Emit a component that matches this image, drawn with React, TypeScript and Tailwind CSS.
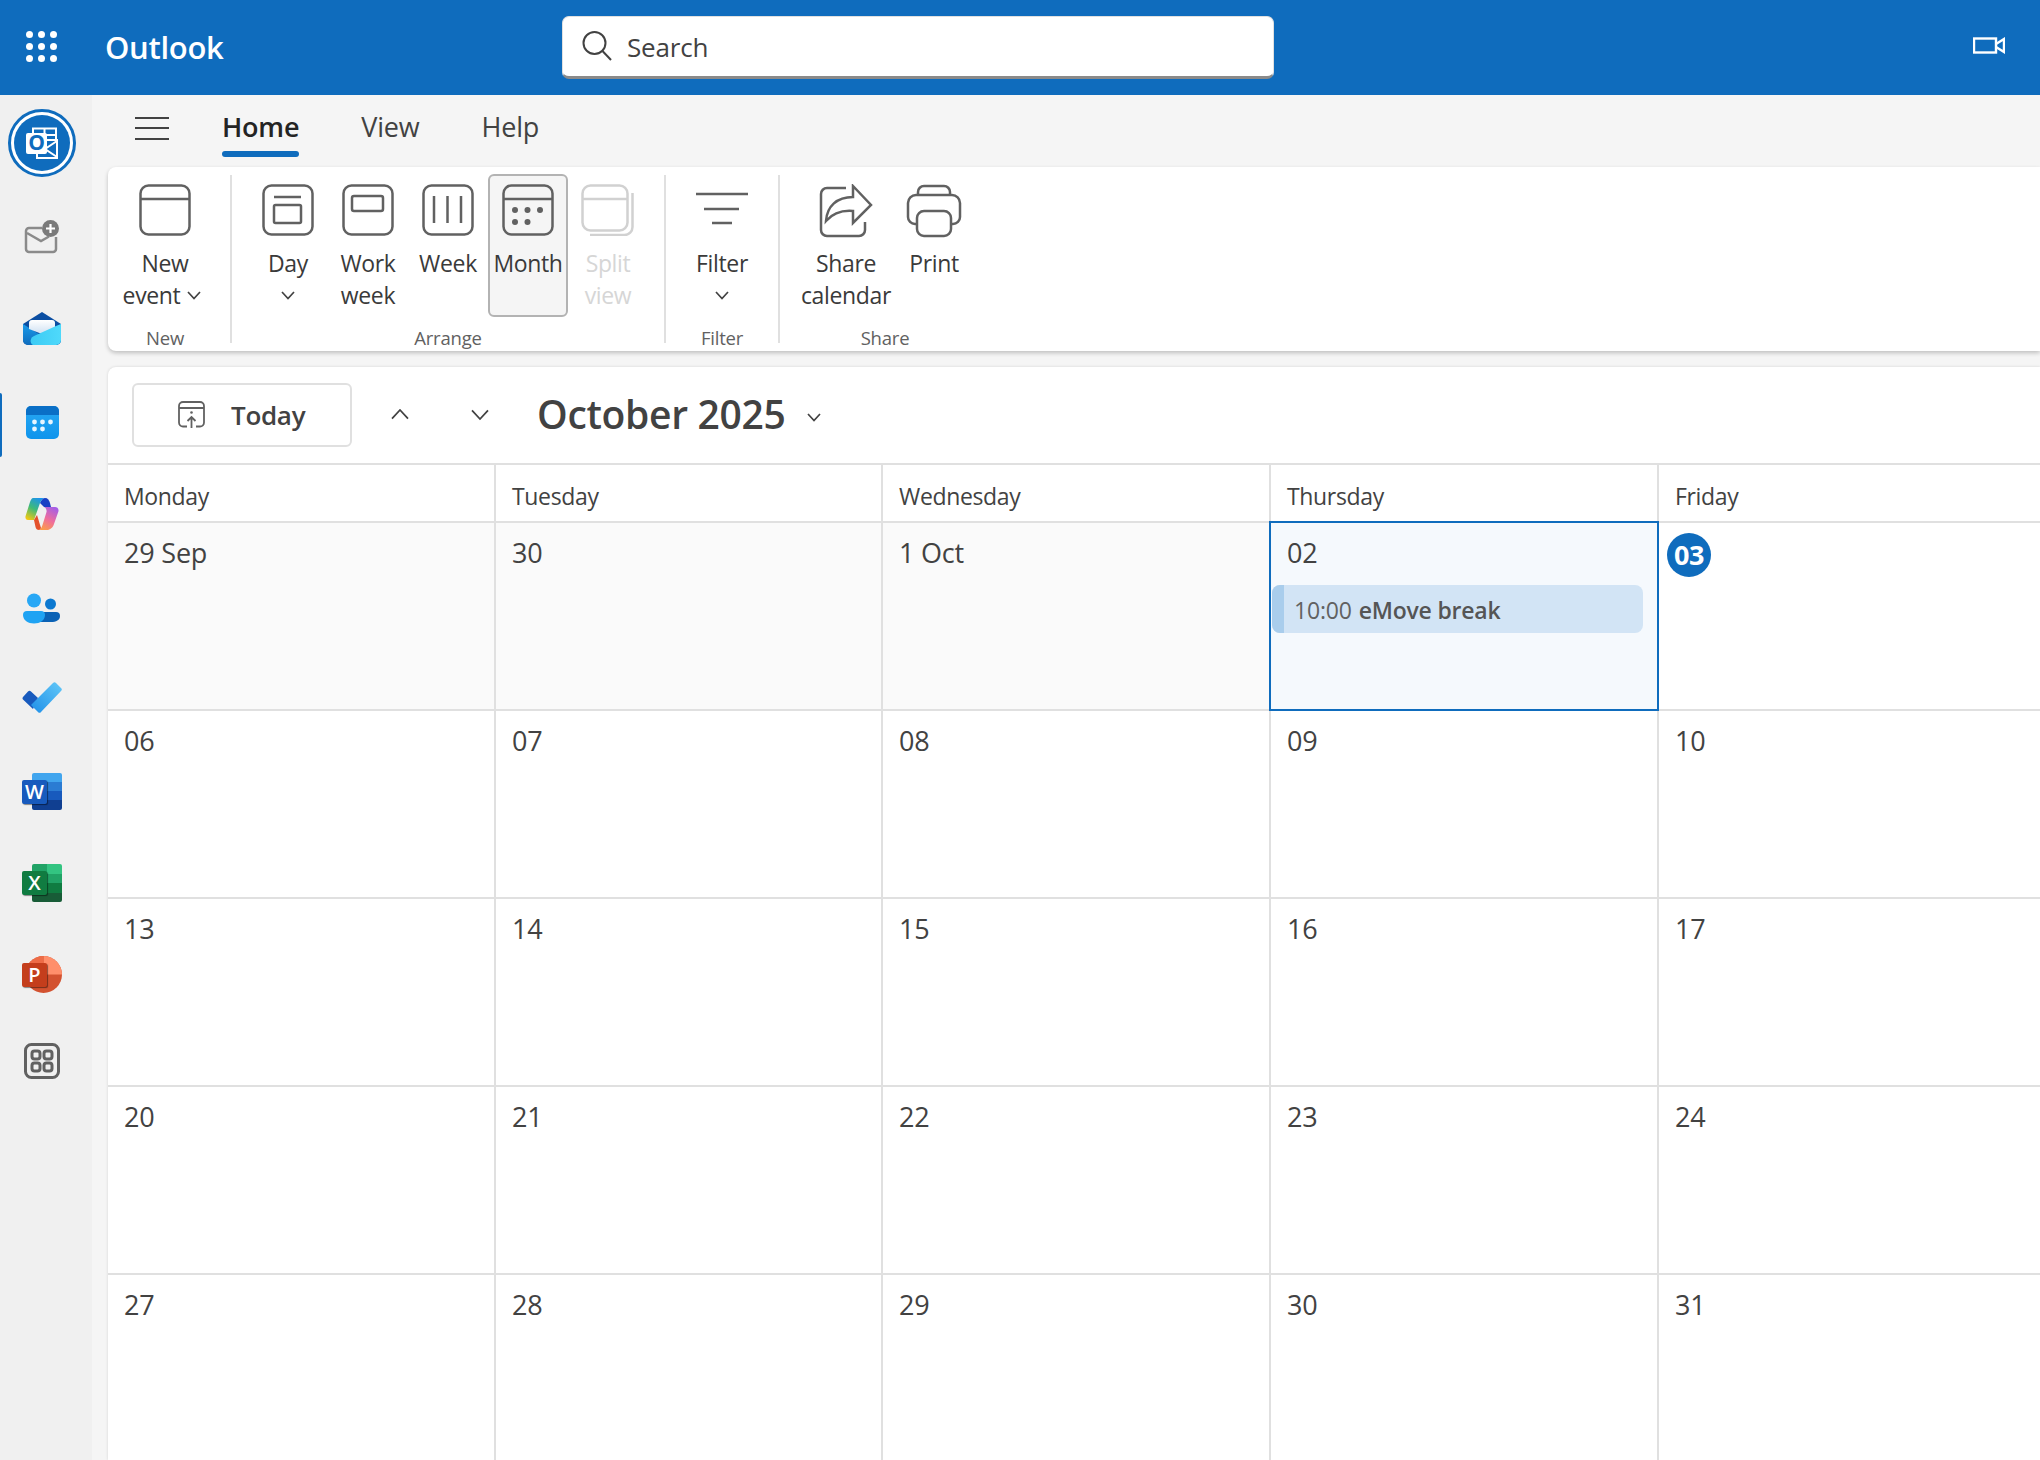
import React from "react";

const weeks = [
  ["29 Sep", "30", "1 Oct", "02", "03"],
  ["06", "07", "08", "09", "10"],
  ["13", "14", "15", "16", "17"],
  ["20", "21", "22", "23", "24"],
  ["27", "28", "29", "30", "31"],
];
const dayNames = ["Monday", "Tuesday", "Wednesday", "Thursday", "Friday"];

const Chevron = ({ up = false, w = 14, color = "#424242" }: { up?: boolean; w?: number; color?: string }) => (
  <svg width={w} height={w / 2 + 2} viewBox="0 0 14 9" fill="none" className="shrink-0">
    <path d={up ? "M1 8L7 1.5L13 8" : "M1 1L7 7.5L13 1"} stroke={color} strokeWidth={w > 16 ? 1.3 : 1.7} />
  </svg>
);

const CalBox = ({ children, line = false }: { children?: React.ReactNode; line?: boolean }) => (
  <svg width="52" height="52" viewBox="0 0 52 52" fill="none" stroke="#616161" strokeWidth="2.5">
    <rect x="1.5" y="1.5" width="49" height="49" rx="8" />
    {line && <path d="M1.5 15H50.5" />}
    {children}
  </svg>
);

const RibbonItem = ({
  icon,
  label,
  label2,
  chevron,
  active,
  disabled,
  w = "w-[80px]",
}: {
  icon: React.ReactNode;
  label: string;
  label2?: string;
  chevron?: boolean;
  active?: boolean;
  disabled?: boolean;
  w?: string;
}) => (
  <div
    className={`${w} h-[143px] flex flex-col items-center pt-[8px] rounded-md border-2 text-[23px] leading-[32px] tracking-[-0.35px] ${
      active ? "bg-[#f5f5f5] border-[#b3b3b3]" : "border-transparent"
    } ${disabled ? "text-[#d6d6d6]" : "text-[#3a3a3a]"}`}
  >
    <div className="h-[54px] flex items-start justify-center">{icon}</div>
    <div className="mt-[9px] whitespace-nowrap">{label}</div>
    {label2 && (
      <div className={`flex items-center gap-[7px] whitespace-nowrap ${chevron ? "pr-[6px]" : ""}`}>
        {label2}
        {chevron && <Chevron />}
      </div>
    )}
    {!label2 && chevron && (
      <div className="h-[32px] flex items-center">
        <Chevron />
      </div>
    )}
  </div>
);

const Divider = () => <div className="w-[2px] my-[8px] bg-[#e0e0e0] shrink-0" />;

const GroupLabel = ({ children }: { children: string }) => (
  <div className="text-center text-[18.5px] leading-[24px] mt-[9px] text-[#616161] tracking-[-0.2px]">{children}</div>
);

const RailSlot = ({ children, active, className = "h-[92px]" }: { children: React.ReactNode; active?: boolean; className?: string }) => (
  <div className={`${className} relative flex items-center justify-center pr-[8px]`}>
    {active && <div className="absolute left-0 top-[18px] w-[2px] h-[64px] bg-[#0f6cbd] rounded-r" />}
    {children}
  </div>
);

const OutlookLogo = () => (
  <div className="w-[68px] h-[68px] rounded-full border-[3px] border-[#0f6cbd] bg-white p-[3px]">
    <div className="w-full h-full rounded-full bg-[#0f6cbd] flex items-center justify-center">
      <svg width="32" height="32" viewBox="0 0 32 32" fill="none">
        <path d="M7 6V1.5H30V13M18.5 1.5V8M7 8H30" stroke="white" strokeWidth="2" />
        <rect x="11" y="13" width="20" height="18" fill="#0f6cbd" stroke="white" strokeWidth="2" />
        <path d="M31 14L19 22L31 30" stroke="white" strokeWidth="2" />
        <rect x="0" y="6" width="21" height="21" rx="2" fill="white" />
        <text x="10.5" y="23" textAnchor="middle" fontSize="21" fontWeight="700" fill="#0f6cbd" fontFamily="Open Sans, sans-serif">O</text>
      </svg>
    </div>
  </div>
);

const NewMail = () => (
  <svg width="36" height="36" viewBox="0 0 36 36" fill="none">
    <path d="M18 9H5A3 3 0 0 0 2 12V30A3 3 0 0 0 5 33H29A3 3 0 0 0 32 30V18" stroke="#8a8a8a" strokeWidth="2.5" />
    <path d="M3 14L17 22L25 17.5" stroke="#8a8a8a" strokeWidth="2.5" />
    <circle cx="26.5" cy="9.5" r="8.5" fill="#7a7a7a" />
    <path d="M26.5 5V14M22 9.5H31" stroke="white" strokeWidth="2.2" />
  </svg>
);

const MailIcon = () => (
  <svg width="38" height="34" viewBox="0 0 38 34">
    <defs>
      <linearGradient id="mb" x1="0" y1="0" x2="0" y2="1">
        <stop offset="0" stopColor="#1a9bea" />
        <stop offset="1" stopColor="#0f6cbd" />
      </linearGradient>
      <linearGradient id="mf" x1="0" y1="0" x2="1" y2="0">
        <stop offset="0" stopColor="#3ccbf4" />
        <stop offset="1" stopColor="#4fd9fb" />
      </linearGradient>
      <linearGradient id="ml" x1="0" y1="0" x2="0" y2="1">
        <stop offset="0" stopColor="#ffffff" />
        <stop offset="1" stopColor="#cfe0f2" />
      </linearGradient>
    </defs>
    <path d="M0 12L19 0L38 12V28A5 5 0 0 1 33 33H5A5 5 0 0 1 0 28Z" fill="#0b4ea2" />
    <path d="M0 12L19 24L38 12V28A5 5 0 0 1 33 33H5A5 5 0 0 1 0 28Z" fill="url(#mb)" />
    <path d="M6 11A3 3 0 0 1 9 8H29A3 3 0 0 1 32 11V17L19 22L6 17Z" fill="url(#ml)" />
    <path d="M10 33A5 5 0 0 1 11 24L33 14L38 12V28A5 5 0 0 1 33 33Z" fill="url(#mf)" />
  </svg>
);

const CalIcon = () => (
  <svg width="33" height="33" viewBox="0 0 33 33">
    <defs>
      <linearGradient id="cb" x1="0" y1="0" x2="0" y2="1">
        <stop offset="0" stopColor="#28a8f3" />
        <stop offset="1" stopColor="#0f94ec" />
      </linearGradient>
    </defs>
    <rect width="33" height="33" rx="5" fill="url(#cb)" />
    <path d="M0 9V5A5 5 0 0 1 5 0H28A5 5 0 0 1 33 5V9Z" fill="#0a6fc6" />
    {[[8.5, 16], [16.5, 16], [24.5, 16], [8.5, 23], [16.5, 23]].map(([x, y]) => (
      <circle key={`${x}-${y}`} cx={x} cy={y} r="2.4" fill="#e8f5ff" />
    ))}
  </svg>
);

const Copilot = () => (
  <svg width="34" height="32" viewBox="0 0 34 32">
    <defs>
      <linearGradient id="c1" x1="0.7" y1="0" x2="0.2" y2="1">
        <stop offset="0" stopColor="#1d93ee" />
        <stop offset="0.5" stopColor="#3fbb78" />
        <stop offset="1" stopColor="#f2c811" />
      </linearGradient>
      <linearGradient id="c2" x1="0.8" y1="0" x2="0.3" y2="1">
        <stop offset="0" stopColor="#a35de8" />
        <stop offset="0.55" stopColor="#ef6d9c" />
        <stop offset="1" stopColor="#fb9c4a" />
      </linearGradient>
    </defs>
    <path d="M15 5C16 2 18 0 20 0C23 0 24 2 25 5L26 9H19Z" fill="#1a3fc4" />
    <path d="M8 0H20C18 0 16 2 15 5L9 22H3C1 22 0 20 0.6 18L5 4C6 1.5 7 0 8 0Z" fill="url(#c1)" />
    <path d="M9 22L12 17L16 30C15.5 31 15 32 14 32C12 32 11 31 10.5 29Z" fill="#e4512b" />
    <path d="M19 9H30C32.5 9 34 11 33.4 13.5L29 26C28 29.5 25 32 22 32H13C15.5 32 16.5 30 17.5 27L21.5 14C22 12 21 10 19 9Z" fill="url(#c2)" />
  </svg>
);

const People = () => (
  <svg width="38" height="32" viewBox="0 0 38 32">
    <circle cx="27.5" cy="11" r="5.5" fill="#0b78d0" />
    <path d="M16 19H33A4 4 0 0 1 37 23C37 27 33 29 28 29H16Z" fill="#0b62b5" />
    <circle cx="11" cy="7.5" r="7" fill="#27a7f5" />
    <path d="M4 18H18A4 4 0 0 1 22 22C22 27 17 30.5 11 30.5S0 27 0 22A4 4 0 0 1 4 18Z" fill="#1fa3f3" />
  </svg>
);

const TodoIcon = () => (
  <svg width="40" height="32" viewBox="0 0 40 32">
    <defs>
      <linearGradient id="t1" x1="0" y1="1" x2="1" y2="0">
        <stop offset="0" stopColor="#1f8fe8" />
        <stop offset="1" stopColor="#62c8f8" />
      </linearGradient>
    </defs>
    <path d="M1 15L6 9.5A2 2 0 0 1 9 9.5L16 16L11 27L1 17.5A2 2 0 0 1 1 15Z" fill="#185abd" />
    <path d="M31 1A2 2 0 0 1 34 1L39 6A2 2 0 0 1 39 9L19 30A2 2 0 0 1 16 30L9 23Z" fill="url(#t1)" />
  </svg>
);

const OfficeLetter = ({ letter, bg }: { letter: string; bg: string }) => (
  <div className={`absolute left-0 top-[7px] w-[25px] h-[24px] rounded-[2px] ${bg} flex items-center justify-center text-white text-[20px] font-semibold font-['Open_Sans',sans-serif] leading-none shadow-[1px_1px_1px_rgba(0,0,0,0.45)]`}>
    {letter}
  </div>
);

const WordIcon = () => (
  <div className="relative w-[40px] h-[37px]">
    <div className="absolute left-[10px] top-0 w-[30px] h-[37px] rounded-[2px] overflow-hidden flex flex-col">
      <div className="flex-1 bg-[#41a5ee]" />
      <div className="flex-1 bg-[#2b7cd3]" />
      <div className="flex-1 bg-[#185abd]" />
      <div className="flex-1 bg-[#103f91]" />
    </div>
    <OfficeLetter letter="W" bg="bg-[#185abd]" />
  </div>
);

const ExcelIcon = () => (
  <div className="relative w-[40px] h-[38px]">
    <div className="absolute left-[10px] top-0 w-[30px] h-[38px] rounded-[2px] overflow-hidden grid grid-cols-2 grid-rows-4">
      <div className="bg-[#21a366]" />
      <div className="bg-[#33c481]" />
      <div className="bg-[#21a366]" />
      <div className="bg-[#21a366]" />
      <div className="bg-[#107c41]" />
      <div className="bg-[#107c41]" />
      <div className="bg-[#185c37]" />
      <div className="bg-[#185c37]" />
    </div>
    <OfficeLetter letter="X" bg="bg-[#107c41]" />
  </div>
);

const PptIcon = () => (
  <div className="relative w-[40px] h-[37px]">
    <svg width="37" height="37" viewBox="0 0 37 37" className="absolute left-[3px] top-0">
      <circle cx="18.5" cy="18.5" r="18.5" fill="#d35230" />
      <path d="M18.5 0A18.5 18.5 0 0 1 37 18.5H18.5Z" fill="#ff8f6b" />
      <path d="M18.5 0A18.5 18.5 0 0 0 0 18.5H18.5Z" fill="#ed6c47" />
    </svg>
    <OfficeLetter letter="P" bg="bg-[#c43e1c]" />
  </div>
);

const AppsIcon = () => (
  <svg width="36" height="36" viewBox="0 0 36 36" fill="none" stroke="#616161" strokeWidth="3">
    <rect x="1.5" y="1.5" width="33" height="33" rx="6" />
    <rect x="8" y="8" width="8" height="8" rx="2.5" />
    <rect x="20" y="8" width="8" height="8" rx="2.5" />
    <rect x="8" y="20" width="8" height="8" rx="2.5" />
    <rect x="20" y="20" width="8" height="8" rx="2.5" />
  </svg>
);

export default function App() {
  return (
    <div className="w-full h-screen overflow-hidden flex flex-col font-['Open_Sans','Noto_Sans',sans-serif] text-[#424242]">
      {/* top bar */}
      <div className="h-[95px] bg-[#0f6cbd] flex items-center shrink-0 relative">
        <div className="w-[83px] shrink-0 flex justify-center -mt-[2px]">
          <div className="grid grid-cols-3 gap-x-[5.5px] gap-y-[5.5px]">
            {Array.from({ length: 9 }).map((_, i) => (
              <div key={i} className="w-[6.5px] h-[6.5px] rounded-full bg-white" />
            ))}
          </div>
        </div>
        <div className="ml-[22px] w-[457px] text-white text-[31px] font-semibold tracking-[-0.3px]">Outlook</div>
        <div className="w-[712px] h-[63px] -mt-[1px] rounded-[7px] bg-white border border-[#e0e0e0] border-b-[3px] border-b-[#8a8a8a] flex items-center pl-[19px] gap-[15px]">
          <svg width="30" height="30" viewBox="0 0 30 30" fill="none" stroke="#424242" strokeWidth="2">
            <circle cx="12.5" cy="12" r="11" />
            <path d="M20.5 20L29 29" />
          </svg>
          <span className="text-[26px] tracking-[-0.2px] text-[#424242] mt-[2px]">Search</span>
        </div>
        <svg className="ml-auto mr-[35px] -mt-[4px]" width="32" height="17" viewBox="0 0 32 17" fill="none" stroke="white" strokeWidth="2.4">
          <rect x="1" y="1.5" width="22" height="14" />
          <path d="M23 7L31 2V15L23 10" />
        </svg>
      </div>

      <div className="flex-1 flex min-h-0">
        {/* left rail */}
        <div className="w-[92px] shrink-0 bg-[#f0f0f0] flex flex-col">
          <div className="h-[96px] flex items-start justify-center pt-[14px] pr-[8px]">
            <OutlookLogo />
          </div>
          <RailSlot><NewMail /></RailSlot>
          <RailSlot><MailIcon /></RailSlot>
          <RailSlot active className="h-[92px] pt-[2px]"><CalIcon /></RailSlot>
          <RailSlot className="h-[92px] pt-[2px]"><Copilot /></RailSlot>
          <RailSlot className="h-[92px] pt-[8px]"><People /></RailSlot>
          <RailSlot className="h-[92px] pt-[2px]"><TodoIcon /></RailSlot>
          <RailSlot className="h-[92px] pt-[4px]"><WordIcon /></RailSlot>
          <RailSlot className="h-[92px] pt-[4px]"><ExcelIcon /></RailSlot>
          <RailSlot className="h-[92px] pt-[2px]"><PptIcon /></RailSlot>
          <RailSlot className="h-[84px]"><AppsIcon /></RailSlot>
        </div>

        {/* main */}
        <div className="flex-1 min-w-0 bg-[#f5f5f5] pl-[16px] flex flex-col">
          <div className="h-[72px] shrink-0 flex items-center pb-[8px] text-[27px] tracking-[-0.2px] text-[#424242]">
            <div className="ml-[27px] w-[34px] flex flex-col gap-[8.5px] mt-[2px]">
              <div className="h-[2px] bg-[#424242]" />
              <div className="h-[2px] bg-[#424242]" />
              <div className="h-[2px] bg-[#424242]" />
            </div>
            <div className="ml-[53px] relative font-semibold text-[#242424]">
              Home
              <div className="absolute left-0 right-0 top-[44px] h-[6px] rounded-full bg-[#0f6cbd]" />
            </div>
            <div className="ml-[62px]">View</div>
            <div className="ml-[62px]">Help</div>
          </div>

          {/* ribbon */}
          <div className="h-[184px] shrink-0 bg-white rounded-l-lg shadow-[0_2px_4px_rgba(0,0,0,0.22)] flex">
            <div className="w-[122px] shrink-0 pt-[7px] pr-[8px]">
              <div className="flex justify-center">
                <RibbonItem
                  label="New"
                  label2="event"
                  chevron
                  w="w-[100px]"
                  icon={<CalBox line />}
                />
              </div>
              <GroupLabel>New</GroupLabel>
            </div>
            <Divider />
            <div className="w-[432px] shrink-0 pt-[7px]">
              <div className="flex justify-center">
                <RibbonItem
                  label="Day"
                  chevron
                  icon={
                    <CalBox>
                      <path d="M12 13H39" />
                      <rect x="12" y="21" width="27" height="18" rx="1.5" />
                    </CalBox>
                  }
                />
                <RibbonItem
                  label="Work"
                  label2="week"
                  icon={
                    <CalBox>
                      <rect x="10" y="12" width="31" height="15" rx="2" />
                    </CalBox>
                  }
                />
                <RibbonItem
                  label="Week"
                  icon={
                    <CalBox>
                      <path d="M12 12V39M25.5 12V39M39 12V39" />
                    </CalBox>
                  }
                />
                <RibbonItem
                  label="Month"
                  active
                  icon={
                    <CalBox line>
                      <g fill="#616161" stroke="none">
                        <circle cx="13" cy="26" r="3" />
                        <circle cx="25.5" cy="26" r="3" />
                        <circle cx="38" cy="26" r="3" />
                        <circle cx="13" cy="38" r="3" />
                        <circle cx="25.5" cy="38" r="3" />
                      </g>
                    </CalBox>
                  }
                />
                <RibbonItem
                  label="Split"
                  label2="view"
                  disabled
                  icon={
                    <svg width="54" height="52" viewBox="0 0 54 52" fill="none" stroke="#d1d1d1" strokeWidth="2.5">
                      <rect x="1.5" y="1.5" width="45" height="45" rx="8" />
                      <path d="M1.5 15H46.5" />
                      <path d="M51.5 9V43A8 8 0 0 1 43.5 51H9" />
                    </svg>
                  }
                />
              </div>
              <GroupLabel>Arrange</GroupLabel>
            </div>
            <Divider />
            <div className="w-[112px] shrink-0 pt-[7px]">
              <div className="flex justify-center">
                <RibbonItem
                  label="Filter"
                  chevron
                  icon={
                    <svg width="52" height="52" viewBox="0 0 52 52" fill="none" stroke="#616161" strokeWidth="2.5">
                      <path d="M0 10H52M8 25H43M16 39H36" />
                    </svg>
                  }
                />
              </div>
              <GroupLabel>Filter</GroupLabel>
            </div>
            <Divider />
            <div className="w-[210px] shrink-0 pt-[7px]">
              <div className="flex pl-[11px]">
                <RibbonItem
                  label="Share"
                  label2="calendar"
                  w="w-[110px]"
                  icon={
                    <svg width="54" height="54" viewBox="0 0 54 54" fill="none" stroke="#616161" strokeWidth="2.5">
                      <path d="M27 4H8A6 6 0 0 0 2 10V46A6 6 0 0 0 8 52H40A6 6 0 0 0 46 46V38" />
                      <path d="M34 2L52 21L34 39V27C22 26 14 29 7 37C8 22 18 13 34 13Z" />
                    </svg>
                  }
                />
                <RibbonItem
                  label="Print"
                  w="w-[66px]"
                  icon={
                    <svg width="56" height="54" viewBox="0 0 56 54" fill="none" stroke="#616161" strokeWidth="2.5">
                      <path d="M12 11V8A6 6 0 0 1 18 2H38A6 6 0 0 1 44 8V11" />
                      <path d="M11 40H9A7 7 0 0 1 2 33V19A8 8 0 0 1 10 11H46A8 8 0 0 1 54 19V33A7 7 0 0 1 47 40H45" />
                      <rect x="11" y="27" width="34" height="25" rx="7" />
                    </svg>
                  }
                />
              </div>
              <GroupLabel>Share</GroupLabel>
            </div>
          </div>

          {/* calendar */}
          <div className="mt-[16px] flex-1 min-h-0 bg-white rounded-tl-lg shadow-[0_0_3px_rgba(0,0,0,0.14)] overflow-hidden">
            <div className="h-[98px] border-b-2 border-[#e0e0e0] flex items-center">
              <div className="ml-[24px] w-[220px] h-[64px] rounded-[6px] border-2 border-[#e0e0e0] flex items-center pl-[44px] gap-[26px] -mt-[1px]">
                <svg width="27" height="27" viewBox="0 0 27 27" fill="none" stroke="#616161" strokeWidth="1.8">
                  <path d="M9 25.5H5A4 4 0 0 1 1 21.5V5A4 4 0 0 1 5 1H22A4 4 0 0 1 26 5V21.5A4 4 0 0 1 22 25.5H18" />
                  <path d="M1 7H26" />
                  <path d="M13.5 27V16M9.5 20L13.5 16L17.5 20" />
                  <circle cx="13.5" cy="11.5" r="1.3" fill="#616161" stroke="none" />
                </svg>
                <span className="text-[26px] font-semibold text-[#424242] tracking-[-0.3px] mt-[1px]">Today</span>
              </div>
              <div className="ml-[38px] -mt-[2px]"><Chevron up w={20} /></div>
              <div className="ml-[60px]"><Chevron w={20} /></div>
              <div className="ml-[47px] text-[39px] font-semibold text-[#424242] tracking-[-0.3px] -mt-[1px]">October 2025</div>
              <div className="ml-[21px] mt-[4px]"><Chevron /></div>
            </div>

            <div className="grid grid-cols-[388px_387px_388px_388px_388px] w-[1939px]">
              {dayNames.map((d) => (
                <div key={d} className="h-[58px] border-r-2 border-b-2 border-[#e0e0e0] pl-[16px] pt-[15px] text-[23px] leading-[32px] tracking-[-0.35px] text-[#424242]">
                  {d}
                </div>
              ))}
              {weeks.map((week, r) =>
                week.map((day, c) => {
                  const selected = r === 0 && c === 3;
                  const today = r === 0 && c === 4;
                  return (
                    <div
                      key={`${r}-${c}`}
                      className={`h-[188px] relative border-r-2 border-b-2 border-[#e0e0e0] ${
                        selected ? "bg-[#f5f9fd]" : r === 0 && c < 3 ? "bg-[#fafafa]" : "bg-white"
                      }`}
                    >
                      {today ? (
                        <div className="ml-[8px] mt-[10px] w-[44px] h-[44px] rounded-full bg-[#0f6cbd] flex items-center justify-center text-white text-[27px] font-bold tracking-[-0.5px]">
                          {day}
                        </div>
                      ) : (
                        <div className="pl-[16px] pt-[10px] text-[27px] leading-[40px] tracking-[-0.2px] text-[#424242]">{day}</div>
                      )}
                      {selected && (
                        <>
                          <div className="absolute -left-[2px] -top-[2px] -right-[2px] -bottom-[2px] border-2 border-[#0f6cbd] pointer-events-none" />
                          <div className="ml-[1px] mt-[12px] w-[371px] h-[48px] rounded-[8px] overflow-hidden bg-[#d2e4f5] flex items-center text-[23px] tracking-[-0.2px] text-[#616161]">
                            <div className="w-[12px] h-full bg-[#a9cdec]" />
                            <span className="ml-[10px] mt-[2px]">10:00</span>
                            <span className="ml-[7px] mt-[2px] font-semibold text-[#555555]">eMove break</span>
                          </div>
                        </>
                      )}
                    </div>
                  );
                })
              )}
            </div>
          </div>
        </div>
      </div>
    </div>
  );
}
